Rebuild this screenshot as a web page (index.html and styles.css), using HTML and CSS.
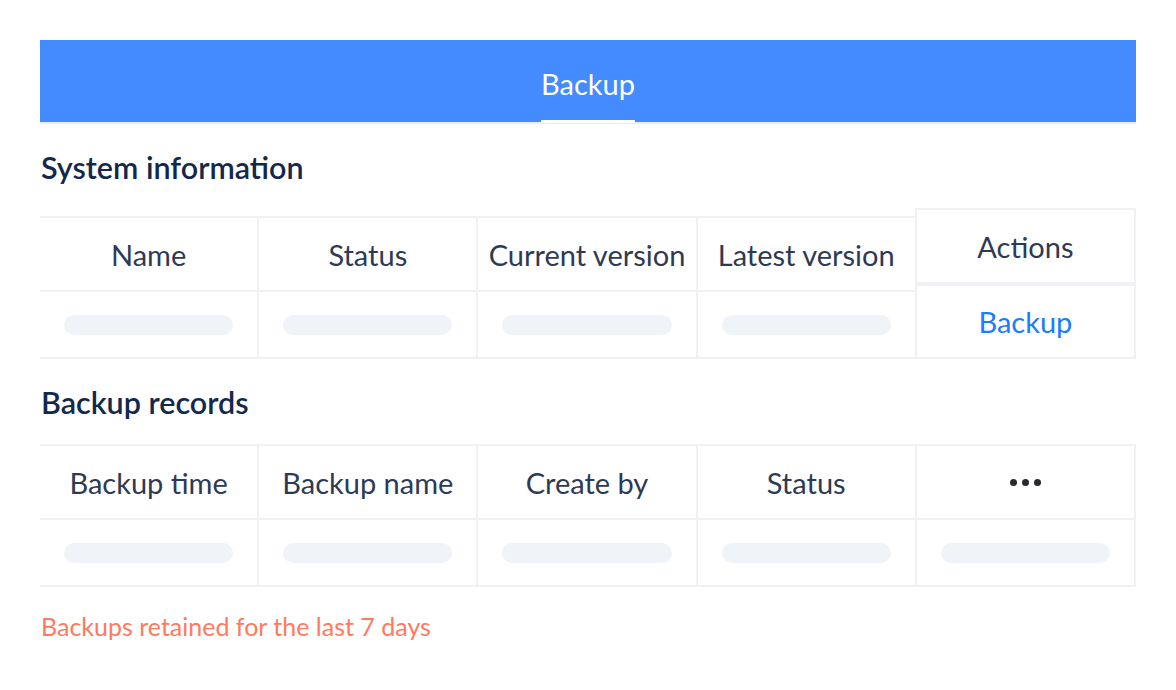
FILE: index.html
```html
<!DOCTYPE html>
<html lang="en">
<head>
  <meta charset="UTF-8">
  <meta name="viewport" content="width=device-width, initial-scale=1.0">
  <title>Backup</title>
  <link rel="stylesheet" href="styles.css">
</head>
<body>
  <div class="page">
    <!-- Üst sekme çubuğu -->
    <div class="tabbar">
      <span class="tab active">Backup</span>
    </div>

    <h2 class="section-title">System information</h2>
    <div class="sys-table">
      <div class="grid four">
        <div class="cell head">Name</div>
        <div class="cell head">Status</div>
        <div class="cell head">Current version</div>
        <div class="cell head">Latest version</div>
        <div class="cell body"><span class="skeleton"></span></div>
        <div class="cell body"><span class="skeleton"></span></div>
        <div class="cell body"><span class="skeleton"></span></div>
        <div class="cell body"><span class="skeleton"></span></div>
      </div>
      <div class="fixed-col">
        <div class="cell head">Actions</div>
        <div class="cell body"><a class="link" href="#">Backup</a></div>
      </div>
    </div>

    <h2 class="section-title">Backup records</h2>
    <div class="grid five">
      <div class="cell head">Backup time</div>
      <div class="cell head">Backup name</div>
      <div class="cell head">Create by</div>
      <div class="cell head">Status</div>
      <div class="cell head"><span class="dots"><i></i><i></i><i></i></span></div>
      <div class="cell body"><span class="skeleton"></span></div>
      <div class="cell body"><span class="skeleton"></span></div>
      <div class="cell body"><span class="skeleton"></span></div>
      <div class="cell body"><span class="skeleton"></span></div>
      <div class="cell body"><span class="skeleton"></span></div>
    </div>

    <p class="note">Backups retained for the last 7 days</p>
  </div>
</body>
</html>
```

FILE: styles.css
```css
body {
  margin: 0;
  background: #fff;
  font-family: Lato, "Noto Sans", sans-serif;
  color: #2e3a55;
}

.page {
  padding: 40px 40px 0;
}

.tabbar {
  height: 82px;
  background: #448bff;
  border-bottom: 2px solid #e8edf3;
  display: flex;
  justify-content: center;
  align-items: flex-end;
}

.tab {
  color: #fff;
  font-size: 29px;
  line-height: 34px;
  padding-bottom: 19px;
  border-bottom: 3px solid transparent;
  margin-bottom: -1px;
}

.tab.active {
  border-bottom-color: #fff;
}

.section-title {
  margin: 0;
  font-size: 30.5px;
  font-weight: 600;
  color: #13284a;
  line-height: 36px;
  padding: 25px 1px 0;
}

/* Tablolar */
.sys-table {
  display: grid;
  grid-template-columns: 4fr 1fr;
  align-items: end;
  margin-top: 23px;
}

.grid {
  display: grid;
  border-top: 2px solid #f0f1f4;
}

.grid.four {
  grid-template-columns: repeat(4, 1fr);
}

.grid.five {
  grid-template-columns: repeat(5, 1fr);
  margin-top: 24px;
}

.cell {
  display: flex;
  align-items: center;
  justify-content: center;
  border-right: 2px solid #f0f1f4;
  border-bottom: 2px solid #f0f1f4;
  font-size: 29px;
  white-space: nowrap;
}

.cell.head {
  height: 72px;
}

.cell.body {
  height: 65px;
  padding: 0 24px;
}

.skeleton {
  display: block;
  width: 100%;
  height: 20px;
  border-radius: 10px;
  background: #f0f3f7;
}

.fixed-col {
  border-top: 2px solid #f0f1f4;
  border-left: 2px solid #f0f1f4;
  border-right: 2px solid #f0f1f4;
  margin-left: -2px;
}

.fixed-col .cell {
  border-right: none;
}

.fixed-col .cell.head {
  height: 72px;
  border-bottom-width: 4px;
}

.fixed-col .cell.body {
  height: 71px;
}

.link {
  color: #1a7cff;
  text-decoration: none;
}

.dots {
  display: flex;
  gap: 5px;
}

.dots i {
  width: 7px;
  height: 7px;
  border-radius: 50%;
  background: #2b2b2f;
}

.note {
  margin: 24px 1px 0;
  font-size: 25px;
  line-height: 30px;
  color: #ff7a60;
}
```
